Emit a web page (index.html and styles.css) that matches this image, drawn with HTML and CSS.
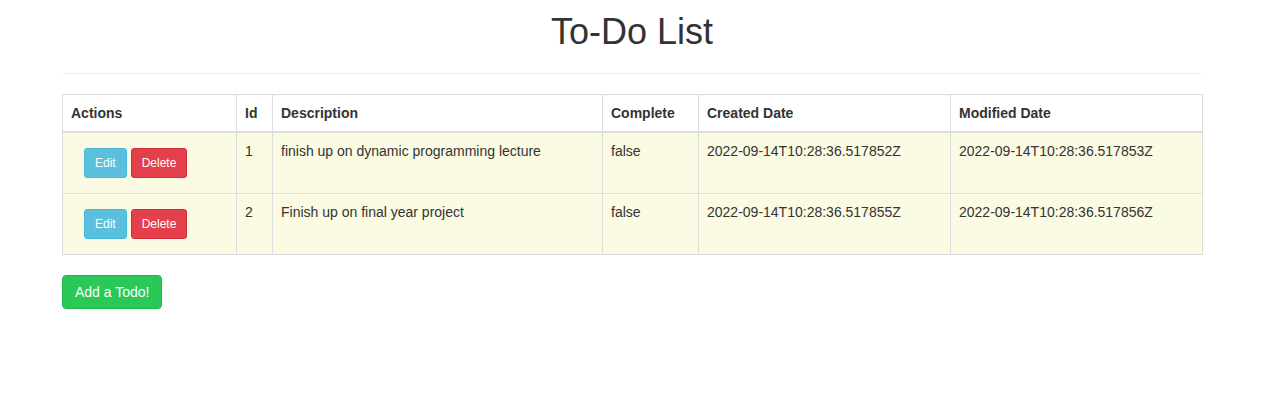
FILE: index.html
```html
<!DOCTYPE html>
<html>
<head>
<meta charset="utf-8">
<title>To-Do List</title>
<link rel="stylesheet" href="styles.css">
</head>
<body>
<div class="container">
  <h1 class="title">To-Do List</h1>
  <hr class="divider">
  <table class="todo-table">
    <colgroup>
      <col class="c-actions"><col class="c-id"><col class="c-desc"><col class="c-complete"><col class="c-created"><col class="c-modified">
    </colgroup>
    <thead>
      <tr>
        <th>Actions</th><th>Id</th><th>Description</th><th>Complete</th><th>Created Date</th><th>Modified Date</th>
      </tr>
    </thead>
    <tbody>
      <tr>
        <td><div class="actions"><button class="btn btn-sm btn-info">Edit</button> <button class="btn btn-sm btn-danger">Delete</button></div></td>
        <td>1</td>
        <td>finish up on dynamic programming lecture</td>
        <td>false</td>
        <td>2022-09-14T10:28:36.517852Z</td>
        <td>2022-09-14T10:28:36.517853Z</td>
      </tr>
      <tr>
        <td><div class="actions"><button class="btn btn-sm btn-info">Edit</button> <button class="btn btn-sm btn-danger">Delete</button></div></td>
        <td>2</td>
        <td>Finish up on final year project</td>
        <td>false</td>
        <td>2022-09-14T10:28:36.517855Z</td>
        <td>2022-09-14T10:28:36.517856Z</td>
      </tr>
    </tbody>
  </table>
  <button class="btn btn-success">Add a Todo!</button>
</div>
</body>
</html>
```
FILE: styles.css
```css
html, body {
  margin: 0;
  padding: 0;
  background: #fff;
}
body {
  font-family: "Liberation Sans", Arial, sans-serif;
  font-size: 14px;
  line-height: 20px;
  color: #333;
}
.container {
  width: 1140px;
  margin: 0 0 0 62px;
}
.title {
  margin: 11px 0 0;
  font-size: 36px;
  line-height: 42px;
  font-weight: 400;
  text-align: center;
  color: #333;
}
.divider {
  margin: 20px 0 20px;
  border: 0;
  border-top: 1px solid #eee;
  height: 0;
}
.todo-table {
  width: 1140px;
  table-layout: fixed;
  border-collapse: collapse;
  border: 1px solid #ddd;
  margin-bottom: 20px;
}
.c-actions { width: 174px; }
.c-id { width: 36px; }
.c-desc { width: 330px; }
.c-complete { width: 96px; }
.c-created { width: 252px; }
.c-modified { width: 252px; }
.todo-table th,
.todo-table td {
  border: 1px solid #ddd;
  padding: 8px;
  text-align: left;
  vertical-align: top;
  line-height: 20px;
}
.todo-table th {
  font-weight: 700;
  border-bottom: 2px solid #ddd;
}
.todo-table tbody tr {
  background: #fafbe2;
}
.actions {
  padding: 7px 0 7px 13px;
  font-size: 0;
}
.actions .btn + .btn {
  margin-left: 4px;
}
.btn {
  display: inline-block;
  font-family: "Liberation Sans", Arial, sans-serif;
  font-size: 14px;
  line-height: 20px;
  padding: 6px 12px;
  border: 1px solid transparent;
  border-radius: 4px;
  color: #fff;
  cursor: pointer;
  vertical-align: top;
}
.btn-sm {
  font-size: 12px;
  line-height: 18px;
  padding: 5px 10px;
  border-radius: 3px;
}
.btn-info {
  background: #5bc0de;
  border-color: #46b8da;
}
.btn-danger {
  background: #e4404b;
  border-color: #d32d3a;
}
.btn-success {
  background: #2ac957;
  border-color: #21b64b;
}
```
